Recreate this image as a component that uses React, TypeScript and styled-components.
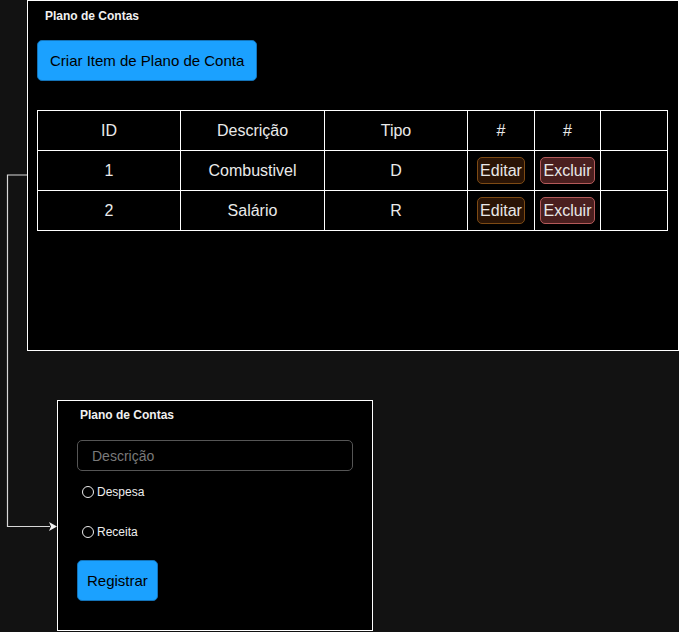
import styled, { createGlobalStyle } from 'styled-components';

const GlobalStyle = createGlobalStyle`
  html, body {
    margin: 0;
    padding: 0;
    background: #121212;
    font-family: "Liberation Sans", Arial, sans-serif;
  }
`;

const Canvas = styled.div`
  position: relative;
  width: 679px;
  height: 632px;
  display: flex;
  flex-direction: column;
  align-items: flex-start;
`;

const Panel = styled.div<{ $left: number; $top: number; $width: number; $height: number }>`
  box-sizing: border-box;
  margin-left: ${p => p.$left}px;
  margin-top: ${p => p.$top}px;
  width: ${p => p.$width}px;
  height: ${p => p.$height}px;
  background: #000;
  border: 1px solid #fff;
  display: flex;
  flex-direction: column;
  align-items: flex-start;
`;

const Title = styled.div<{ $indent: number; $top: number }>`
  margin: ${p => p.$top}px 0 0 ${p => p.$indent}px;
  font-size: 12px;
  font-weight: bold;
  line-height: 14px;
  color: #f0f0f0;
`;

const BlueButton = styled.button<{ $top: number; $left: number; $pad: number }>`
  box-sizing: border-box;
  margin: ${p => p.$top}px 0 0 ${p => p.$left}px;
  height: 41px;
  padding: 0 ${p => p.$pad}px;
  background: #1ba1ff;
  border: 1px solid #1473b8;
  border-radius: 5px;
  color: #000;
  font-family: inherit;
  font-size: 15px;
`;

const Table = styled.table`
  margin: 29px 0 0 9px;
  border-collapse: collapse;
  color: #eaeaea;
  font-size: 16px;
`;

const Cell = styled.td<{ $w: number }>`
  width: ${p => p.$w}px;
  height: 40px;
  padding: 0;
  border: 1px solid #fff;
  text-align: center;
  vertical-align: middle;
  box-sizing: border-box;
`;

const SmallButton = styled.button<{ $bg: string; $line: string }>`
  box-sizing: border-box;
  height: 27px;
  padding: 0 2px;
  background: ${p => p.$bg};
  border: 1px solid ${p => p.$line};
  border-radius: 5px;
  color: #e8e8e8;
  font-family: inherit;
  font-size: 16px;
`;

const Input = styled.input`
  box-sizing: border-box;
  margin: 18px 0 0 19px;
  width: 276px;
  height: 31px;
  padding: 0 14px;
  background: #000;
  border: 1px solid #555;
  border-radius: 5px;
  color: #ddd;
  font-family: inherit;
  font-size: 14px;
  &::placeholder {
    color: #7a7a7a;
  }
`;

const RadioRow = styled.label<{ $top: number }>`
  margin: ${p => p.$top}px 0 0 24px;
  display: flex;
  align-items: center;
  gap: 3px;
  color: #eee;
  font-size: 12px;
  line-height: 14px;
`;

const Circle = styled.span`
  box-sizing: border-box;
  width: 12px;
  height: 12px;
  border: 1px solid #eee;
  border-radius: 50%;
`;

const Connector = styled.svg`
  position: absolute;
  left: 0;
  top: 0;
  pointer-events: none;
`;

const widths = [143, 144, 143, 67, 66, 67];
const rows = [
  { id: '1', desc: 'Combustivel', tipo: 'D' },
  { id: '2', desc: 'Salário', tipo: 'R' },
];

export default function App() {
  return (
    <Canvas>
      <GlobalStyle />
      <Panel $left={27} $top={0} $width={652} $height={351}>
        <Title $indent={17} $top={8}>Plano de Contas</Title>
        <BlueButton $top={17} $left={9} $pad={12}>Criar Item de Plano de Conta</BlueButton>
        <Table>
          <tbody>
            <tr>
              {['ID', 'Descrição', 'Tipo', '#', '#', ''].map((h, i) => (
                <Cell key={i} $w={widths[i]}>{h}</Cell>
              ))}
            </tr>
            {rows.map(r => (
              <tr key={r.id}>
                <Cell $w={widths[0]}>{r.id}</Cell>
                <Cell $w={widths[1]}>{r.desc}</Cell>
                <Cell $w={widths[2]}>{r.tipo}</Cell>
                <Cell $w={widths[3]}>
                  <SmallButton $bg="#2a1405" $line="#7d4a14">Editar</SmallButton>
                </Cell>
                <Cell $w={widths[4]}>
                  <SmallButton $bg="#4a1f1f" $line="#b45a5a">Excluir</SmallButton>
                </Cell>
                <Cell $w={widths[5]} />
              </tr>
            ))}
          </tbody>
        </Table>
      </Panel>

      <Panel $left={57} $top={49} $width={316} $height={231}>
        <Title $indent={22} $top={7}>Plano de Contas</Title>
        <Input placeholder="Descrição" />
        <RadioRow $top={14}><Circle />Despesa</RadioRow>
        <RadioRow $top={26}><Circle />Receita</RadioRow>
        <BlueButton $top={21} $left={19} $pad={9}>Registrar</BlueButton>
      </Panel>

      <Connector width="679" height="632">
        <polyline points="27,175 7.5,175 7.5,526.5 50,526.5" fill="none" stroke="#d8d8d8" strokeWidth="1.2" />
        <polygon points="57,526.5 49,522 51,526.5 49,531" fill="#f2f2f2" />
      </Connector>
    </Canvas>
  );
}
